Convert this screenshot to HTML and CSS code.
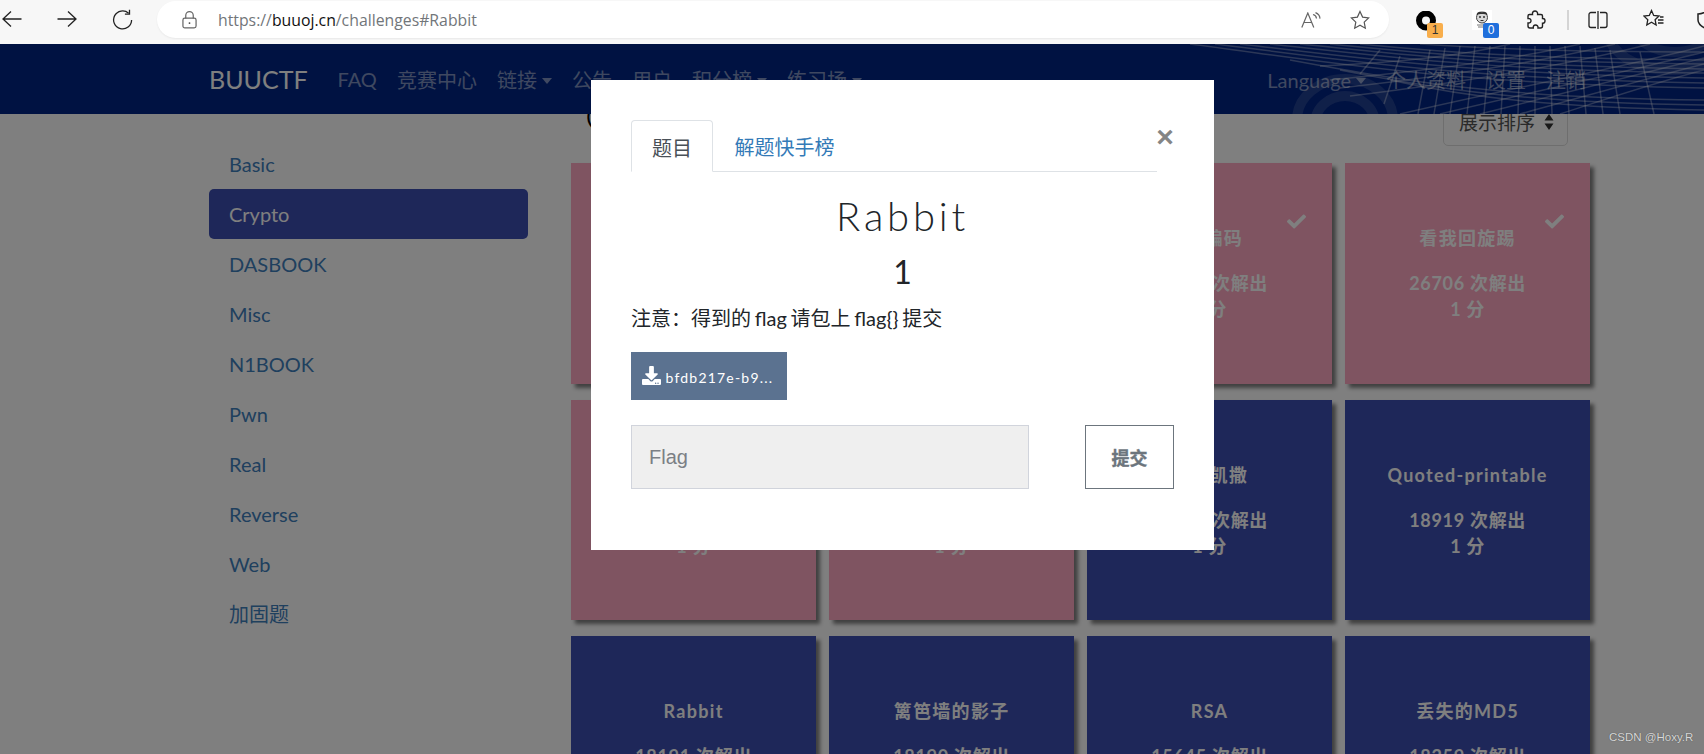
FILE: index.html
```html
<!DOCTYPE html>
<html lang="zh-CN">
<head>
<meta charset="utf-8">
<title>BUUCTF</title>
<link rel="stylesheet" href="styles.css">
</head>
<body>
<header class="chrome">
  <svg class="ico back" viewBox="0 0 20 20"><path d="M19.5 10H1M9 2.5 1 10l8 7.5"/></svg>
  <svg class="ico fwd" viewBox="0 0 20 20"><path d="M.5 10H19M11 2.5l8 7.5-8 7.5"/></svg>
  <svg class="ico reload" viewBox="0 0 21 21"><path d="M16.6 4.2A9 9 0 1 0 19.6 11"/><path d="M17.5 .8v4.4h-4.6"/></svg>
  <div class="address">
    <svg class="lock" viewBox="0 0 16 19"><path d="M4 8V4.6a4 4 0 0 1 8 0V8"/><rect x="1" y="7.5" width="14" height="10.5" rx="2"/><circle cx="8" cy="12.8" r="1" class="fill"/></svg>
    <span class="url">https://<b>buuoj.cn</b>/challenges#Rabbit</span>
    <svg class="read" viewBox="0 0 20 16"><path d="M.8 15.5 6.8 1l6 14.5M2.8 10.5h8"/><path d="M12 2.5a4.500 4.500 0 0 1 3.500 4M14.500 .6a7 7 0 0 1 4.500 6"/></svg>
    <svg class="star" viewBox="0 0 20 20"><path d="m10 1.500 2.600 5.600 6 .8-4.400 4.200 1.100 6.100L10 15.200l-5.300 3 1.100-6.100L1.400 7.900l6-.8z"/></svg>
  </div>
  <div class="tools">
    <div class="ext">
      <svg class="ring" viewBox="0 0 20 20"><circle cx="10" cy="9.500" r="7" /></svg>
      <span class="badge orange">1</span>
    </div>
    <div class="ext">
      <svg class="panda" viewBox="0 0 20 20"><rect width="20" height="20" fill="#fff"/><ellipse cx="10" cy="7.500" rx="5.500" ry="5.500" fill="#d8d8d8" stroke="#444"/><path d="M4.500 5C5 2 8 1 10 2.500 12 1 15 2 15.500 5 13 3.500 7 3.500 4.500 5z" fill="#333"/><circle cx="8" cy="7" r="1" fill="#333"/><circle cx="12" cy="7" r="1" fill="#333"/><path d="M8.500 10.500h3" stroke="#333"/><path d="M5 15h10M6 17h8" stroke="#777"/></svg>
      <span class="badge blue">0</span>
    </div>
    <svg class="ico puzzle" viewBox="0 0 21 20"><path d="M6.500 4.500C6 1.500 8 1 9 1c1.200 0 3 .6 2.600 3.500H15a1.500 1.500 0 0 1 1.500 1.500v2.500c2.200-.3 2.500 1.500 2.500 2.300 0 1-.5 2.700-2.500 2.400V16a2 2 0 0 1-2 2H12c.3-2-1-3-2.500-3S7 16 7.300 18H4a2 2 0 0 1-2-2v-3c2 .3 3-1 3-2.300S4 8.200 2 8.500V6a1.500 1.500 0 0 1 1.500-1.500z"/></svg>
    <span class="sep"></span>
    <svg class="ico split" viewBox="0 0 20 20"><path d="M10 1v18M8 2.500H3a2 2 0 0 0-2 2v11a2 2 0 0 0 2 2h5M12 2.500h5a2 2 0 0 1 2 2v11a2 2 0 0 1-2 2h-5"/></svg>
    <svg class="ico fav" viewBox="0 0 21 20"><path d="m8.500 1.500 2.200 5 5.300.6-3.900 3.600 1 5.300-4.600-2.700-4.700 2.700 1-5.300L1 7.100l5.300-.6z"/><path d="M15 11h5.500M15 14h5.500M17 8h3.500"/></svg>
    <svg class="ico shield" viewBox="0 0 20 20"><path d="M1 4c3 0 6-1 9-3 3 2 6 3 9 3v6c0 4-4 7-9 9-5-2-9-5-9-9z"/><path d="M10 1v18"/></svg>
  </div>
</header>

<div class="stage">
  <nav class="nav">
    <svg class="nav-art" viewBox="0 0 554 70" preserveAspectRatio="none">
      <g class="rings">
        <ellipse cx="195" cy="76" rx="48" ry="41"/>
        <ellipse cx="195" cy="80" rx="30" ry="28"/>
        <ellipse cx="520" cy="-14" rx="62" ry="40"/>
        <ellipse cx="525" cy="-18" rx="40" ry="26"/>
      </g>
      <g class="mesh">
        <path d="M40 0C180 18 300 40 554 44"/><path d="M65 0C195 16 310 35 554 39"/><path d="M90 0C210 14 320 30 554 34"/><path d="M120 0C230 12 330 26 554 29"/><path d="M150 0C250 10 340 22 554 25"/>
        <path d="M180 0C270 9 355 18 554 20"/><path d="M210 0C290 8 370 14 554 16"/><path d="M270 0C340 5 420 8 554 8"/><path d="M140 16C260 38 350 54 554 56"/><path d="M190 26C290 46 380 59 554 61"/>
        <path d="M240 36C320 54 410 64 554 66"/><path d="M554 2C480 22 380 40 250 70"/><path d="M554 8C485 26 400 44 290 70"/><path d="M554 14C490 30 420 48 330 70"/>
        <path d="M554 20C495 35 440 51 370 70"/><path d="M554 26C500 40 460 54 410 70"/><path d="M500 0C430 18 330 36 200 52"/><path d="M465 0C400 16 315 30 190 44"/><path d="M430 0C370 14 300 24 180 36"/>
        <path d="M360 0C320 10 260 18 170 22"/><path d="M280 6 268 70"/><path d="M295 4 284 70"/><path d="M310 2 300 70"/><path d="M325 2 317 70"/><path d="M340 2 334 70"/><path d="M355 2 351 70"/>
        <path d="M370 2 368 70"/><path d="M385 2 385 70"/><path d="M400 2 402 70"/><path d="M415 2 419 70"/><path d="M430 2 436 70"/><path d="M445 4 453 70"/><path d="M460 6 470 70"/><path d="M490 8 504 70"/><path d="M250 12 234 60"/>
        <path d="M230 6 210 30"/>
      </g>
    </svg>
    <a class="brand">BUUCTF</a>
    <a class="nav-link">FAQ</a>
    <a class="nav-link">竞赛中心</a>
    <a class="nav-link caret">链接</a>
    <a class="nav-link">公告</a>
    <a class="nav-link">用户</a>
    <a class="nav-link caret">积分榜</a>
    <a class="nav-link caret">练习场</a>
    <div class="nav-right">
      <a class="nav-link caret">Language</a>
      <a class="nav-link">个人资料</a>
      <a class="nav-link">设置</a>
      <a class="nav-link">注销</a>
    </div>
  </nav>

  <div class="layout">
    <aside class="sidebar">
      <a class="side-item">Basic</a>
      <a class="side-item active">Crypto</a>
      <a class="side-item">DASBOOK</a>
      <a class="side-item">Misc</a>
      <a class="side-item">N1BOOK</a>
      <a class="side-item">Pwn</a>
      <a class="side-item">Real</a>
      <a class="side-item">Reverse</a>
      <a class="side-item">Web</a>
      <a class="side-item">加固题</a>
    </aside>
    <main class="main">
      <div class="head">
        <h1 class="heading">Challenges</h1>
        <button class="sort">展示排序<svg class="sort-ico" viewBox="0 0 10 16"><path d="M5 0l4.500 6.500H.5zM5 16 .5 9.500h9z"/></svg></button>
      </div>
      <div class="cards">
        <div class="card solved"><svg class="check" viewBox="0 0 512 512"><path d="M173.898 439.404l-166.4-166.4c-9.997-9.997-9.997-26.206 0-36.204l36.203-36.204c9.997-9.998 26.207-9.998 36.204 0L192 312.69 432.095 72.596c9.997-9.997 26.207-9.997 36.204 0l36.203 36.204c9.997 9.997 9.997 26.206 0 36.204l-294.4 294.401c-9.998 9.997-26.207 9.997-36.204-.001z"/></svg><p class="card-title">一眼就解密</p><p class="card-meta">38210 次解出<br>1 分</p></div>
        <div class="card solved"><svg class="check" viewBox="0 0 512 512"><path d="M173.898 439.404l-166.4-166.4c-9.997-9.997-9.997-26.206 0-36.204l36.203-36.204c9.997-9.998 26.207-9.998 36.204 0L192 312.69 432.095 72.596c9.997-9.997 26.207-9.997 36.204 0l36.203 36.204c9.997 9.997 9.997 26.206 0 36.204l-294.4 294.401c-9.998 9.997-26.207 9.997-36.204-.001z"/></svg><p class="card-title">MD5</p><p class="card-meta">34120 次解出<br>1 分</p></div>
        <div class="card solved"><svg class="check" viewBox="0 0 512 512"><path d="M173.898 439.404l-166.4-166.4c-9.997-9.997-9.997-26.206 0-36.204l36.203-36.204c9.997-9.998 26.207-9.998 36.204 0L192 312.69 432.095 72.596c9.997-9.997 26.207-9.997 36.204 0l36.203 36.204c9.997 9.997 9.997 26.206 0 36.204l-294.4 294.401c-9.998 9.997-26.207 9.997-36.204-.001z"/></svg><p class="card-title">Url编码</p><p class="card-meta">29310 次解出<br>1 分</p></div>
        <div class="card solved"><svg class="check" viewBox="0 0 512 512"><path d="M173.898 439.404l-166.4-166.4c-9.997-9.997-9.997-26.206 0-36.204l36.203-36.204c9.997-9.998 26.207-9.998 36.204 0L192 312.69 432.095 72.596c9.997-9.997 26.207-9.997 36.204 0l36.203 36.204c9.997 9.997 9.997 26.206 0 36.204l-294.4 294.401c-9.998 9.997-26.207 9.997-36.204-.001z"/></svg><p class="card-title">看我回旋踢</p><p class="card-meta">26706 次解出<br>1 分</p></div>
        <div class="card solved"><p class="card-title">摩丝</p><p class="card-meta">25310 次解出<br>1 分</p></div>
        <div class="card solved"><p class="card-title">password</p><p class="card-meta">21540 次解出<br>1 分</p></div>
        <div class="card"><p class="card-title">变异凯撒</p><p class="card-meta">19810 次解出<br>1 分</p></div>
        <div class="card"><p class="card-title">Quoted-printable</p><p class="card-meta">18919 次解出<br>1 分</p></div>
        <div class="card"><p class="card-title">Rabbit</p><p class="card-meta">18191 次解出<br>1 分</p></div>
        <div class="card"><p class="card-title">篱笆墙的影子</p><p class="card-meta">18190 次解出<br>1 分</p></div>
        <div class="card"><p class="card-title">RSA</p><p class="card-meta">15645 次解出<br>1 分</p></div>
        <div class="card"><p class="card-title">丢失的MD5</p><p class="card-meta">18259 次解出<br>1 分</p></div>
      </div>
    </main>
  </div>

  <div class="backdrop"></div>

  <section class="modal">
    <button class="close">×</button>
    <div class="tabs">
      <a class="tab active">题目</a>
      <a class="tab">解题快手榜</a>
    </div>
    <h2 class="title">Rabbit</h2>
    <div class="points">1</div>
    <p class="note">注意：得到的 flag 请包上 flag{} 提交</p>
    <a class="download"><svg class="dl-ico" viewBox="0 0 512 512"><path d="M216 0h80c13.300 0 24 10.700 24 24v168h87.700c17.800 0 26.700 21.500 14.100 34.100L269.700 378.300c-7.500 7.500-19.800 7.500-27.300 0L90.100 226.100c-12.600-12.600-3.700-34.100 14.100-34.100H192V24c0-13.300 10.700-24 24-24zm296 376v112c0 13.300-10.700 24-24 24H24c-13.300 0-24-10.700-24-24V376c0-13.300 10.700-24 24-24h146.700l49 49c20.100 20.100 52.500 20.100 72.600 0l49-49H488c13.300 0 24 10.700 24 24zm-124 88c0-11-9-20-20-20s-20 9-20 20 9 20 20 20 20-9 20-20zm64 0c0-11-9-20-20-20s-20 9-20 20 9 20 20 20 20-9 20-20z"/></svg>bfdb217e-b9...</a>
    <div class="flag-row">
      <input class="flag" placeholder="Flag">
      <button class="submit">提交</button>
    </div>
  </section>

  <span class="watermark">CSDN @Hoxy.R</span>
</div>
</body>
</html>
```
FILE: styles.css
```css
* { box-sizing: border-box; }
html, body { margin: 0; height: 100%; overflow: hidden; }
body {
  width: 1704px;
  height: 754px;
  background: #fff;
  font-family: Lato, "Noto Sans CJK SC", sans-serif;
  font-size: 20px;
}

/* Browser chrome */
.chrome {
  height: 44px;
  display: flex;
  align-items: flex-start;
  background: #f7f7f7;
  position: relative;
}
.ico { fill: none; stroke: #222; stroke-width: 1.3; flex: none; }
.back { width: 20px; height: 20px; margin: 9px 0 0 2px; }
.fwd { width: 20px; height: 20px; margin: 9px 0 0 35px; }
.reload { width: 21px; height: 21px; margin: 9px 0 0 35px; }
.address {
  width: 1232px;
  height: 37px;
  margin: 1px 0 0 24px;
  border-radius: 19px;
  background: #fff;
  box-shadow: 0 1px 2px rgba(0, 0, 0, .06);
  display: flex;
  align-items: center;
  flex: none;
}
.lock { width: 15px; height: 18px; margin-left: 25px; fill: none; stroke: #666; stroke-width: 1.3; flex: none; }
.lock .fill { fill: #444; stroke: none; }
.url {
  margin-left: 21px;
  font-family: "Open Sans", sans-serif;
  font-size: 15.8px;
  color: #72767a;
  white-space: nowrap;
  width: 1083px;
}
.url b { font-weight: 400; color: #111; }
.read { width: 20px; height: 16px; fill: none; stroke: #666; stroke-width: 1.2; flex: none; }
.star { width: 20px; height: 20px; fill: none; stroke: #555; stroke-width: 1.2; flex: none; margin-left: 29px; }
.tools { display: flex; align-items: flex-start; flex: none; margin-left: 27px; }
.ext { position: relative; width: 20px; height: 24px; flex: none; margin-top: 11px; }
.ext + .ext { margin: 10px 0 0 36px; }
.ring { width: 20px; height: 20px; fill: none; stroke: #000; stroke-width: 6; display: block; }
.panda { width: 20px; height: 20px; display: block; }
.badge {
  position: absolute;
  left: 11px;
  top: 12px;
  width: 16px;
  height: 15px;
  border-radius: 2px;
  font-family: "Liberation Sans", sans-serif;
  font-size: 12px;
  line-height: 15px;
  text-align: center;
}
.ext + .ext .badge { top: 13px; }
.orange { background: #f8ae4c; color: #333; }
.blue { background: #1f6fdc; color: #fff; }
.puzzle { width: 21px; height: 20px; margin: 10px 0 0 34px; stroke-width: 1.4; }
.sep { width: 2px; height: 20px; margin: 10px 0 0 20px; background: #d4d4d4; flex: none; }
.split { width: 20px; height: 20px; margin: 10px 0 0 19px; }
.fav { width: 21px; height: 20px; margin: 9px 0 0 35px; }
.shield { width: 20px; height: 20px; margin: 10px 0 0 33px; stroke-width: 1.5; }

/* Page */
.stage {
  position: relative;
  height: 710px;
  overflow: hidden;
  background: #fff;
}
.nav {
  position: absolute;
  left: 0;
  right: 0;
  top: 0;
  z-index: 5;
  height: 70px;
  padding: 0 108px 0 209px;
  background: #002484;
  display: flex;
  align-items: center;
  box-shadow: 0 -1px 0 #1c3160;
}
.nav-art { position: absolute; right: 0; top: 0; width: 554px; height: 70px; }
.rings ellipse { fill: none; stroke: rgba(255, 255, 255, .13); stroke-width: 10; }
.mesh path { fill: none; stroke: rgba(255, 255, 255, .34); stroke-width: 1.5; }
.brand { font-size: 25px; color: #fff; margin-right: 20px; position: relative; }
.nav-link { padding: 0 10px; color: rgba(255, 255, 255, .5); white-space: nowrap; position: relative; }
.caret::after {
  content: "";
  display: inline-block;
  margin-left: 5px;
  vertical-align: 4px;
  border-top: 6px solid currentColor;
  border-left: 5.5px solid transparent;
  border-right: 5.5px solid transparent;
}
.nav-right { margin-left: auto; display: flex; align-items: baseline; position: relative; }

.layout { display: flex; padding-left: 209px; }
.sidebar { width: 319px; padding-top: 95px; margin-right: 43px; flex: none; }
.side-item {
  display: block;
  height: 50px;
  padding: 0 20px;
  line-height: 50px;
  color: #3f80bd;
  border-radius: 5px;
}
.side-item.active { background: #3c4eb2; color: #fff; }
.main { width: 1020px; flex: none; }
.head {
  width: 997px;
  height: 102px;
  margin-bottom: 17px;
  display: flex;
  justify-content: space-between;
  align-items: flex-end;
}
.heading { margin: 0 0 8px 14px; font-size: 40px; line-height: 44px; font-weight: 300; color: #000; }
.sort {
  height: 44px;
  width: 125px;
  padding: 0 0 5px 15px;
  border: 1px solid #ddd;
  border-radius: 5px;
  background: #fff;
  color: #555;
  font: inherit;
  font-size: 19px;
  display: flex;
  align-items: center;
  white-space: nowrap;
}
.sort-ico { width: 10px; height: 16px; margin-left: 9px; fill: #333; flex: none; }
.cards {
  display: grid;
  grid-template-columns: repeat(4, 245.3px);
  grid-auto-rows: 220.5px;
  gap: 16px 12.7px;
}
.card {
  position: relative;
  padding-top: 60px;
  background: #3c4eb2;
  color: #fff;
  text-align: center;
  box-shadow: 4px 4px 4px rgba(0, 0, 0, .5);
  font-weight: 700;
  font-size: 18px;
  letter-spacing: .7px;
}
.card.solved { background: #fea8c2; }
.card-title { margin: 0; height: 30px; line-height: 30px; letter-spacing: 1.3px; }
.card-meta { margin: 17px 0 0; line-height: 26px; }
.check { position: absolute; left: 200px; top: 49px; width: 19px; height: 19px; fill: #fff; }

/* Modal */
.backdrop { position: absolute; inset: 0; z-index: 10; background: rgba(0, 0, 0, .5); }
.modal {
  position: absolute;
  z-index: 11;
  left: 591px;
  top: 36px;
  width: 623px;
  height: 470px;
  padding: 40px 40px 0;
  background: #fff;
  color: #212529;
}
.close {
  position: absolute;
  left: 564px;
  top: 45px;
  width: 20px;
  height: 24px;
  padding: 0;
  border: 0;
  background: none;
  color: #858585;
  font: 700 30px/24px "Liberation Sans", sans-serif;
}
.tabs { width: 526px; height: 52px; display: flex; border-bottom: 1px solid #dee2e6; }
.tab { width: 82px; height: 52px; line-height: 54px; text-align: center; color: #337ab7; white-space: nowrap; }
.tab + .tab { width: auto; padding: 0 20px 0 21.5px; }
.tab.active { color: #495057; background: #fff; border: 1px solid #dee2e6; border-bottom-color: #fff; border-radius: 4px 4px 0 0; }
.title { margin: 20px 0 0; font-size: 40px; line-height: 48px; font-weight: 300; text-align: center; letter-spacing: 3.8px; }
.points { margin-top: 12px; font-size: 32px; line-height: 40px; font-weight: 400; text-align: center; }
.note { margin: 11px 0 0; line-height: 30px; color: #212529; white-space: nowrap; word-spacing: -1.4px; }
.download {
  display: flex;
  align-items: center;
  width: 156px;
  height: 48px;
  margin-top: 19px;
  padding: 2px 0 0 10.5px;
  background: #5b7290;
  color: #fff;
  font-size: 14px;
  letter-spacing: 1.2px;
  white-space: nowrap;
}
.dl-ico { width: 19px; height: 19px; margin: -3px 5px 0 0; fill: #fff; flex: none; }
.flag-row { margin-top: 25px; display: flex; justify-content: space-between; width: 543px; }
.flag {
  width: 398px;
  height: 64px;
  padding: 0 17px;
  border: 1px solid #d1d4dc;
  background: #efefef;
  font: 20px "Liberation Sans", sans-serif;
  color: #6c757d;
}
.flag::placeholder { color: #7b7f85; opacity: 1; }
.submit {
  width: 89px;
  height: 64px;
  padding: 0;
  border: 1px solid #6c757d;
  background: #fff;
  color: #6c757d;
  font: 700 18px "Noto Sans CJK SC", sans-serif;
  -webkit-text-stroke: .4px #6c757d;
}
.watermark {
  position: absolute;
  z-index: 12;
  left: 1609px;
  top: 686px;
  font: 11.5px/14px "Liberation Sans", sans-serif;
  color: #d8d8d8;
  text-shadow: 0 0 1px #444;
  white-space: nowrap;
}
```
